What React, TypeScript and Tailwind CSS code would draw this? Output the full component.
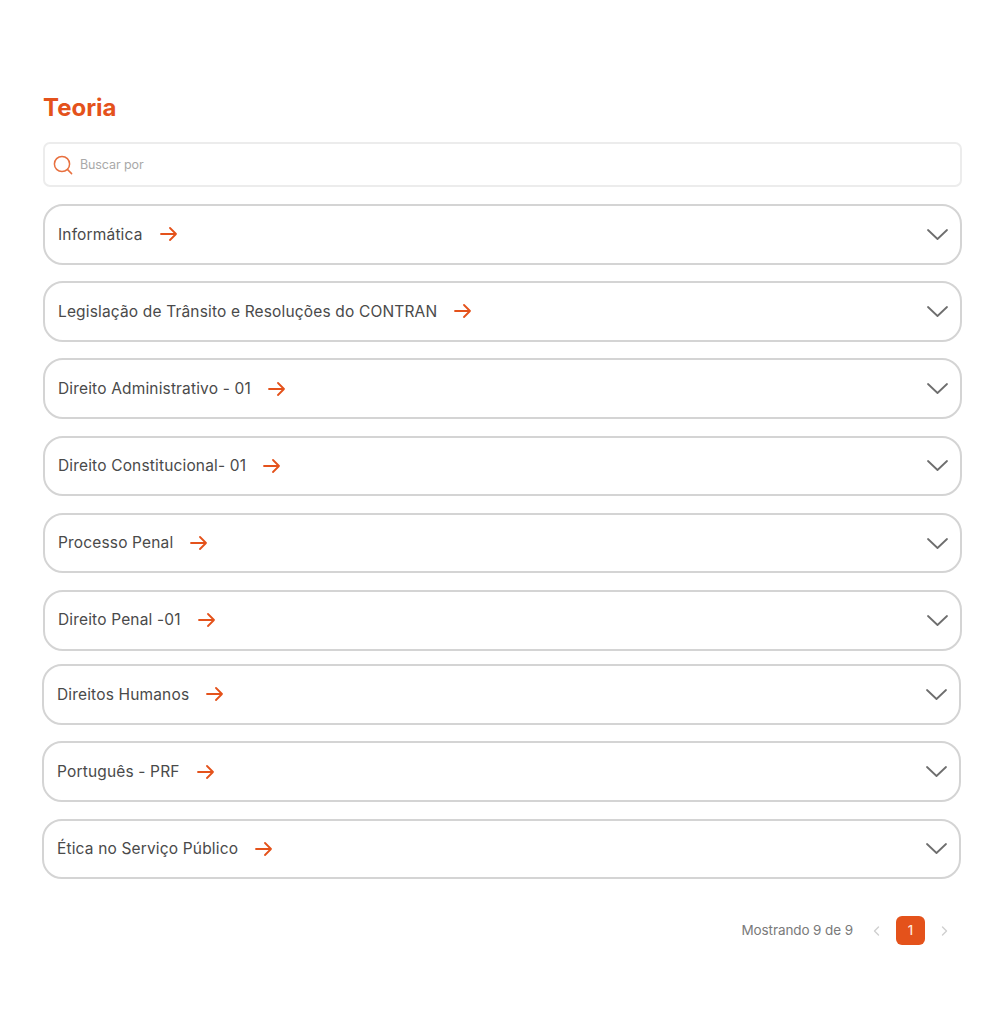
import React from "react";

const rows = [
  "Informática",
  "Legislação de Trânsito e Resoluções do CONTRAN",
  "Direito Administrativo - 01",
  "Direito Constitucional- 01",
  "Processo Penal",
  "Direito Penal -01",
];
const rows2 = ["Direitos Humanos", "Português - PRF", "Ética no Serviço Público"];

function Arrow() {
  return (
    <svg width="17" height="14" viewBox="0 0 17 14" fill="none" stroke="#e4521b" strokeWidth="1.8" strokeLinecap="round" strokeLinejoin="round">
      <path d="M1 7h15M10 1l6 6-6 6" />
    </svg>
  );
}

function Row({ label }: { label: string }) {
  return (
    <div className="flex h-[60.6px] items-center justify-between rounded-[20px] border-2 border-[#d4d4d4] bg-white pl-[13px] pr-[12.5px]">
      <div className="flex items-center gap-[17px]">
        <span className="text-[15.5px] leading-none text-[#4a4a4a] [font-family:Inter,sans-serif] tracking-[0.16px]">{label}</span>
        <Arrow />
      </div>
      <svg width="21" height="11" viewBox="0 0 21 11" fill="none" stroke="#6e6e6e" strokeWidth="1.8" strokeLinecap="round" strokeLinejoin="round">
        <path d="M1 1l9.5 9L20 1" />
      </svg>
    </div>
  );
}

export default function App() {
  return (
    <div className="min-h-[1024px] bg-white pt-[92px] pl-[43px] pr-[42px]">
      <h1 className="text-[24px] leading-[31px] font-bold text-[#e4521b] [font-family:Inter,sans-serif]">Teoria</h1>
      <div className="mt-[19px] flex h-[45px] items-center gap-[7px] rounded-[7px] border-2 border-[#ececec] bg-white pl-[8px]">
        <svg width="20" height="20" viewBox="0 0 20 20" fill="none" stroke="#e8703f" strokeWidth="1.5" strokeLinecap="round">
          <circle cx="9" cy="9" r="7.6" />
          <path d="M14.6 14.6l4 4" />
        </svg>
        <span className="text-[12.5px] pt-[2px] text-[#a9a9a9] [font-family:Inter,sans-serif] tracking-[-0.1px]">Buscar por</span>
      </div>
      <div className="mt-[17px] flex flex-col gap-[16.6px]">
        {rows.map((r) => (
          <Row key={r} label={r} />
        ))}
      </div>
      <div className="mt-[13.6px] -ml-px mr-px flex flex-col gap-[16.6px]">
        {rows2.map((r) => (
          <Row key={r} label={r} />
        ))}
      </div>
      <div className="mt-[37px] flex items-center justify-end pr-[14px]">
        <span className="text-[13.5px] text-[#7a7a7a] [font-family:Inter,sans-serif] tracking-[-0.1px]">Mostrando 9 de 9</span>
        <svg className="ml-[20px]" width="7" height="10" viewBox="0 0 7 10" fill="none" stroke="#cfcfcf" strokeWidth="1.4" strokeLinecap="round" strokeLinejoin="round">
          <path d="M5.5 1 1.5 5l4 4" />
        </svg>
        <div className="ml-[16px] flex h-[29px] w-[29px] items-center justify-center rounded-[6px] bg-[#e4521b] text-[13px] font-medium text-[#ffe9df] [font-family:Inter,sans-serif]">1</div>
        <svg className="ml-[16px]" width="7" height="10" viewBox="0 0 7 10" fill="none" stroke="#cfcfcf" strokeWidth="1.4" strokeLinecap="round" strokeLinejoin="round">
          <path d="M1.5 1l4 4-4 4" />
        </svg>
      </div>
    </div>
  );
}
